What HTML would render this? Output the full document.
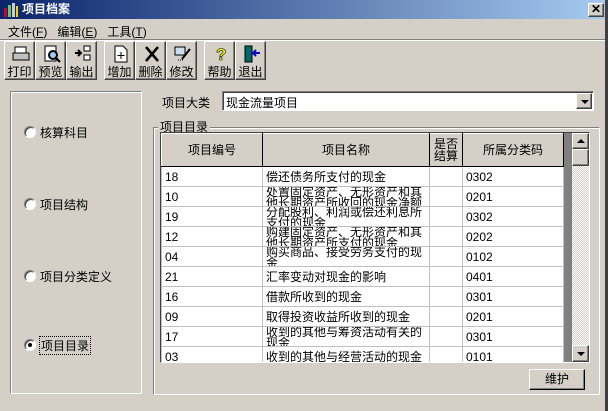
<!DOCTYPE html><html><head><meta charset="utf-8"><style>
*{margin:0;padding:0;box-sizing:border-box}
body{width:608px;height:411px;background:#d4d0c8;font-family:"Liberation Sans","Noto Sans CJK SC",sans-serif;font-size:12px;color:#000;position:relative;overflow:hidden}
.a{position:absolute}
.title{left:0;top:0;width:605px;height:19px;background:linear-gradient(90deg,#0a246a,#a6caf0);color:#fff;font-weight:bold;font-size:12px;line-height:19px;padding-left:22px}
.raised{border:1px solid;border-color:#fff #404040 #404040 #fff;box-shadow:inset -1px -1px #808080}
.sunken{border:1px solid;border-color:#808080 #fff #fff #808080;box-shadow:inset 1px 1px #404040}
.btn{top:41px;height:39px;width:31px;text-align:center;font-size:12px;line-height:13px;padding-top:24px}
.btn svg{position:absolute;left:7px;top:3px}
.grp{border:1px solid;border-color:#808080 #fff #fff #808080;box-shadow:inset 1px 1px #fff,1px 1px #808080 inset}
.radio{width:12px;height:12px;border-radius:50%;background:#fff;border:1px solid;border-color:#808080 #fff #fff #808080;box-shadow:inset 1px 1px #404040}
table{border-collapse:collapse;table-layout:fixed;background:#fff}
td{border:1px solid #c0c0c0;padding:0;font-size:12px}
td div{height:19px;overflow:hidden;padding:4px 3px 0;line-height:12px}
td div.w{padding-top:0;line-height:11px}
th{background:#d4d0c8;font-weight:normal;border:1px solid #000;border-color:#fff #000 #000 #fff;padding:0}
th div{height:32px;line-height:12px;display:flex;align-items:center;justify-content:center;text-align:center}
</style></head><body>
<div class="a" style="left:605px;top:0;width:3px;height:411px;background:#404040"></div>
<div class="a title">项目档案</div>
<svg class="a" style="left:3px;top:3px" width="16" height="14"><rect x="1" y="5" width="3" height="9" fill="#c03"/><rect x="5" y="2" width="3" height="12" fill="#6c6"/><rect x="9" y="0" width="3" height="14" fill="#ccc"/><rect x="13" y="3" width="2" height="11" fill="#fc0"/></svg>
<div class="a raised" style="left:588px;top:3px;width:16px;height:14px;background:#d4d0c8;font-size:12px;line-height:11px;text-align:center;font-weight:bold">✕</div>
<div class="a" style="left:8px;top:23px">文件(<u>F</u>)&nbsp;&nbsp;&nbsp;编辑(<u>E</u>)&nbsp;&nbsp;&nbsp;工具(<u>T</u>)</div>
<div class="a" style="left:0;top:39px;width:605px;height:2px;border-top:1px solid #808080;border-bottom:1px solid #fff"></div>
<div class="a raised btn" style="left:4px">打印<svg width="18" height="18"><rect x="3" y="2" width="11" height="6" fill="#fff" stroke="#000"/><rect x="1" y="8" width="16" height="7" fill="#c0c0c0" stroke="#000"/></svg></div>
<div class="a raised btn" style="left:35px">预览<svg width="18" height="18"><rect x="2" y="1" width="11" height="15" fill="#fff" stroke="#000"/><circle cx="10" cy="10" r="4" fill="#9cf" stroke="#000" stroke-width="2"/><path d="M13 13l4 4" stroke="#000" stroke-width="2"/></svg></div>
<div class="a raised btn" style="left:66px">输出<svg width="18" height="18"><path d="M1 8h6M4 5l3 3-3 3" stroke="#000" stroke-width="2" fill="none"/><rect x="10" y="1" width="6" height="5" fill="#fff" stroke="#000"/><rect x="10" y="10" width="6" height="5" fill="#fff" stroke="#000"/></svg></div>
<div class="a raised btn" style="left:104px">增加<svg width="18" height="18"><path d="M3 1h8l4 4v12H3z" fill="#fff" stroke="#000"/><path d="M9 7v7M5.5 10.5h7" stroke="#000"/></svg></div>
<div class="a raised btn" style="left:135px">删除<svg width="18" height="18"><path d="M3 2l12 14M15 2L3 16" stroke="#000" stroke-width="2.5"/></svg></div>
<div class="a raised btn" style="left:166px">修改<svg width="18" height="18"><rect x="1" y="2" width="10" height="8" fill="#cde" stroke="#000"/><path d="M16 4L8 14" stroke="#000" stroke-width="2"/><path d="M4 15h6" stroke="#000" stroke-dasharray="1 1"/></svg></div>
<div class="a raised btn" style="left:204px">帮助<svg width="18" height="18"><text x="4" y="15" font-size="17" font-weight="bold" fill="#ff0" stroke="#000" stroke-width=".6" font-family="Liberation Sans">?</text></svg></div>
<div class="a raised btn" style="left:235px">退出<svg width="18" height="18"><rect x="2" y="1" width="7" height="16" fill="#066" stroke="#000"/><path d="M10 8h7M13 5l-3 3 3 3" stroke="#00c" stroke-width="2" fill="none"/></svg></div>

<div class="a grp" style="left:10px;top:91px;width:132px;height:303px"></div>
<div class="a radio" style="left:24px;top:126px"></div><div class="a" style="left:40px;top:124px">核算科目</div>
<div class="a radio" style="left:24px;top:198px"></div><div class="a" style="left:40px;top:196px">项目结构</div>
<div class="a radio" style="left:24px;top:270px"></div><div class="a" style="left:40px;top:268px">项目分类定义</div>
<div class="a radio" style="left:24px;top:339px"><div class="a" style="left:3px;top:3px;width:4px;height:4px;background:#000;border-radius:50%"></div></div><div class="a" style="left:39px;top:336px;border:1px dotted #000;padding:0 1px">项目目录</div>

<div class="a" style="left:162px;top:94px">项目大类</div>
<div class="a sunken" style="left:222px;top:91px;width:372px;height:20px;background:#fff;padding:2px 3px">现金流量项目</div>
<div class="a raised" style="left:576px;top:93px;width:16px;height:16px;background:#d4d0c8"><div class="a" style="left:4px;top:6px;border:4px solid transparent;border-top:4px solid #000;border-bottom:0"></div></div>

<div class="a grp" style="left:153px;top:127px;width:447px;height:268px"></div>
<div class="a" style="left:158px;top:118px;background:#d4d0c8;padding:0 2px">项目目录</div>

<div class="a" style="left:160px;top:132px;width:430px;height:231px;background:#808080;border:1px solid;border-color:#404040 #fff #fff #404040;overflow:hidden">
<table style="width:402px">
<colgroup><col style="width:101px"><col style="width:167px"><col style="width:33px"><col style="width:101px"></colgroup>
<tr><th><div>项目编号</div></th><th><div>项目名称</div></th><th><div>是否<br>结算</div></th><th><div>所属分类码</div></th></tr>
<tr><td><div>18</div></td><td><div>偿还债务所支付的现金</div></td><td></td><td><div>0302</div></td></tr>
<tr><td><div>10</div></td><td><div class="w">处置固定资产、无形资产和其他长期资产所收回的现金净额</div></td><td></td><td><div>0201</div></td></tr>
<tr><td><div>19</div></td><td><div class="w">分配股利、利润或偿还利息所支付的现金</div></td><td></td><td><div>0302</div></td></tr>
<tr><td><div>12</div></td><td><div class="w">购建固定资产、无形资产和其他长期资产所支付的现金</div></td><td></td><td><div>0202</div></td></tr>
<tr><td><div>04</div></td><td><div class="w">购买商品、接受劳务支付的现金</div></td><td></td><td><div>0102</div></td></tr>
<tr><td><div>21</div></td><td><div>汇率变动对现金的影响</div></td><td></td><td><div>0401</div></td></tr>
<tr><td><div>16</div></td><td><div>借款所收到的现金</div></td><td></td><td><div>0301</div></td></tr>
<tr><td><div>09</div></td><td><div>取得投资收益所收到的现金</div></td><td></td><td><div>0201</div></td></tr>
<tr><td><div>17</div></td><td><div class="w">收到的其他与筹资活动有关的现金</div></td><td></td><td><div>0301</div></td></tr>
<tr><td><div>03</div></td><td><div>收到的其他与经营活动的现金</div></td><td></td><td><div>0101</div></td></tr>
</table>
<div class="a" style="left:411px;top:0;width:17px;height:229px;background:repeating-conic-gradient(#fff 0 25%,#d4d0c8 0 50%) 0 0/2px 2px"></div>
<div class="a raised" style="left:411px;top:0;width:17px;height:16px;background:#d4d0c8"><div class="a" style="left:4px;top:5px;border:4px solid transparent;border-bottom:4px solid #000;border-top:0"></div></div>
<div class="a raised" style="left:411px;top:16px;width:17px;height:17px;background:#d4d0c8"></div>
<div class="a raised" style="left:411px;top:212px;width:17px;height:17px;background:#d4d0c8"><div class="a" style="left:4px;top:6px;border:4px solid transparent;border-top:4px solid #000;border-bottom:0"></div></div>
</div>
<div class="a raised" style="left:529px;top:369px;width:56px;height:21px;background:#d4d0c8;text-align:center;line-height:18px;border-color:#fff #000 #000 #fff">维护</div>
</body></html>
